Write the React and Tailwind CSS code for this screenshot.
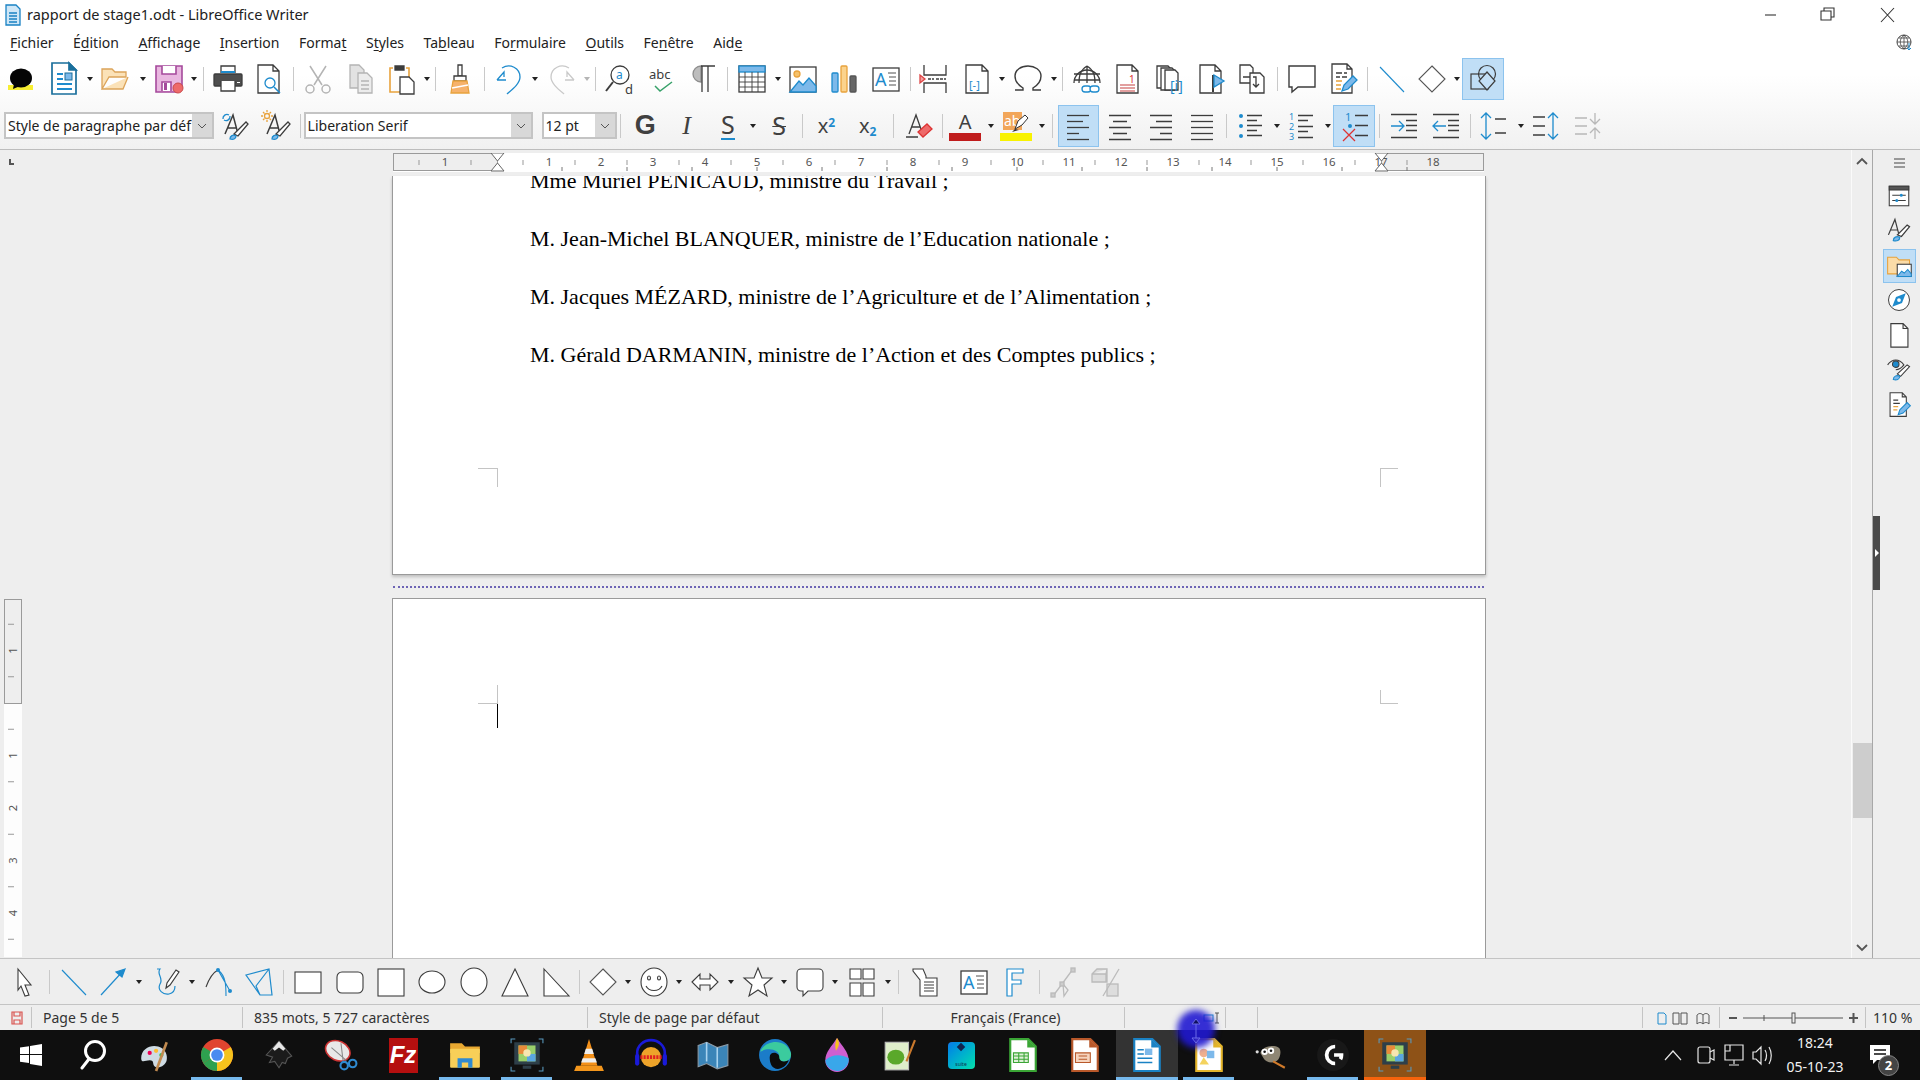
import React from 'react';

const DARK = '#3c3c3c';
const BLUE = '#1e8bcd';
const SKY = '#7db9ea';
const ORANGE = '#e8a23c';

// base frame for a 32px toolbar icon
const Ic = ({ children, size = 32, sw = 1.3, stroke = DARK }) => (
  <svg width={size} height={size} viewBox="0 0 32 32" fill="none" stroke={stroke} strokeWidth={sw} overflow="visible">
    {children}
  </svg>
);

const Page = ({ x = 6, y = 2, w = 20, h = 28, c = 5, stroke = DARK, fill = '#fff' }) => (
  <path d={`M${x} ${y}h${w - c}l${c} ${c}v${h - c}h-${w}z M${x + w - c} ${y}v${c}h${c}`} stroke={stroke} fill={fill} />
);

const Lines = ({ x, y, w, gap = 5, n = 4, stroke = DARK, widths }) => (
  <g stroke={stroke}>
    {Array.from({ length: n }).map((_, i) => {
      const ww = widths ? widths[i] : w;
      return <path key={i} d={`M${x} ${y + i * gap + 0.5}h${ww}`} />;
    })}
  </g>
);

const icons = {
  speech: (
    <Ic stroke="none">
      <rect x="3" y="22" width="25" height="5" fill="#f7ee32" />
      <ellipse cx="16" cy="15" rx="11" ry="9.5" fill="#050505" />
      <path d="M9 21l-1 5 7-3z" fill="#050505" />
    </Ic>
  ),
  newDoc: (
    <Ic stroke="#1a6f9c" sw="1.7">
      <path d="M4 0h17l7 7v24H4z" fill="#fff" />
      <path d="M21 0l7 7h-7z" fill="#1a6f9c" />
      <path d="M9 11h6M9 16h6M9 21h15M9 26h15" stroke={BLUE} strokeWidth="2" />
      <rect x="17" y="10" width="7" height="7" fill={SKY} strokeWidth="1" />
    </Ic>
  ),
  open: (
    <Ic stroke="#dca45a" sw="1.3">
      <path d="M3 26V6h10l3 3h11v5H10L3 26h21l5-12" fill="#fbe2b8" />
    </Ic>
  ),
  save: (
    <Ic stroke="#a54a9c" sw="1.6">
      <path d="M3 3h26v20l-5 6H3z" fill="#e9b7e0" />
      <path d="M9 3v8h14V3" fill="#fff" />
      <path d="M9 28V19h9v9" fill="#fff" />
      <rect x="11" y="20" width="3" height="7" fill="#a54a9c" stroke="none" />
      <circle cx="25" cy="25" r="5" fill="#ee6a6a" stroke="#c94a4a" strokeWidth="1" />
    </Ic>
  ),
  print: (
    <Ic>
      <path d="M9 10V3h14v7" fill="#fff" />
      <rect x="9" y="8" width="14" height="2" fill={BLUE} stroke="none" />
      <rect x="2" y="11" width="28" height="12" fill="#4e4e4e" rx="1" />
      <path d="M9 18v10h14V18" fill="#fff" />
      <rect x="25" y="19" width="3" height="1" fill="#fff" stroke="none" />
    </Ic>
  ),
  preview: (
    <Ic>
      <Page x={5} y={2} w={21} h={28} c={6} />
      <circle cx="17" cy="20" r="5" stroke={BLUE} fill="#fff" />
      <path d="M21 24l6 6" stroke={BLUE} strokeWidth="1.5" />
    </Ic>
  ),
  cut: (
    <Ic stroke="#b4b4b4" sw="1.5">
      <path d="M8 3l12 19M24 3L12 22" />
      <circle cx="8" cy="26" r="4" />
      <circle cx="24" cy="26" r="4" />
    </Ic>
  ),
  copy: (
    <Ic stroke="#b4b4b4">
      <path d="M6 2h9l5 5v18H6z" fill="#e2e2e2" />
      <path d="M14 10h9l5 5v15H14z" fill="#ececec" />
      <path d="M17 18h8M17 22h8M17 26h8" />
    </Ic>
  ),
  paste: (
    <Ic>
      <path d="M21 5h3v24H5V5h3" stroke={ORANGE} strokeWidth="1.6" />
      <path d="M10 3h9v4h-9z" fill={DARK} />
      <path d="M15 14h9l5 5v12H15z" fill="#fff" />
    </Ic>
  ),
  brush: (
    <Ic>
      <path d="M14 2h4v11h-4z" fill="#fff" />
      <path d="M10 13h12v5H10z" fill="#fff" />
      <path d="M9 18h14l2 12H7z" fill="#f6b26b" stroke={ORANGE} />
      <path d="M8 25l16-3" stroke="#fff" />
    </Ic>
  ),
  undo: (
    <Ic stroke={BLUE} sw="1.3">
      <path d="M3 17l7-8 0 5M3 17h9" />
      <path d="M8 5c8-5 18 0 18 9 0 6-6 11-13 17" />
    </Ic>
  ),
  redo: (
    <Ic stroke="#c9c9c9" sw="1.3">
      <path d="M29 17l-7-8 0 5M29 17h-9" />
      <path d="M24 5C16 0 6 5 6 14c0 6 6 11 13 17" />
    </Ic>
  ),
  find: (
    <Ic>
      <circle cx="16" cy="12" r="9" />
      <path d="M9 19L2 28" strokeWidth="2" />
      <text x="12" y="16" fontSize="12" fill={BLUE} stroke="none" fontFamily="Noto Sans">a</text>
      <text x="21" y="31" fontSize="13" fill={DARK} stroke="none" fontFamily="Noto Sans">d</text>
    </Ic>
  ),
  spell: (
    <Ic>
      <text x="3" y="16" fontSize="13" fill={DARK} stroke="none" fontFamily="Noto Sans">abc</text>
      <path d="M9 23l5 5 12-9" stroke="#37a169" strokeWidth="1.5" />
    </Ic>
  ),
  pilcrow: (
    <Ic>
      <path d="M14 3a8 8 0 000 16z" fill="#bdbdbd" stroke="#8e8e8e" />
      <path d="M14 3h14M15 3v26M21 3v26" />
    </Ic>
  ),
  table: (
    <Ic>
      <rect x="3" y="3" width="26" height="26" fill="#fff" />
      <rect x="3" y="3" width="26" height="6" fill={SKY} stroke={BLUE} />
      <path d="M3 14h26M3 19h26M3 24h26M9 9v20M16 9v20M22 9v20" strokeWidth="0.9" />
    </Ic>
  ),
  image: (
    <Ic>
      <rect x="3" y="4" width="26" height="25" fill="#fff" />
      <circle cx="10" cy="11" r="3" fill="#f6c26b" stroke={ORANGE} />
      <path d="M3 29l9-11 4 4 6-7 7 8v6z" fill={SKY} stroke={BLUE} />
    </Ic>
  ),
  chart: (
    <Ic stroke="none">
      <rect x="3" y="10" width="6" height="19" rx="1" fill={SKY} stroke={BLUE} />
      <rect x="12" y="3" width="6" height="26" rx="1" fill="#fbd38d" stroke={ORANGE} />
      <rect x="21" y="13" width="6" height="16" rx="1" fill="#666" stroke="#555" />
    </Ic>
  ),
  textbox: (
    <Ic>
      <rect x="3" y="5" width="26" height="23" fill="#fff" />
      <text x="5" y="23" fontSize="18" fill={BLUE} stroke="none" fontFamily="Noto Sans">A</text>
      <path d="M18 10h8M19 14h7M19 18h7M19 22h7" strokeWidth="0.9" />
    </Ic>
  ),
  pageBreak: (
    <Ic>
      <path d="M5 2v10h22V2M5 30V20h22v10" />
      <path d="M9 16h6M17 16h10" strokeDasharray="3 1" />
      <path d="M1 12l5 4-5 4z" fill="#f2a0a0" stroke="#d44" />
    </Ic>
  ),
  field: (
    <Ic>
      <Page x={5} y={2} w={22} h={28} c={6} />
      <text x="8" y="26" fontSize="11" fill={BLUE} stroke="none" fontFamily="Noto Sans">[-]</text>
    </Ic>
  ),
  omega: (
    <Ic sw="1.4">
      <path d="M3 27h8v-2C6 22 3 18 3 13 3 7 9 3 16 3s13 4 13 10c0 5-3 9-8 12v2h8" />
    </Ic>
  ),
  link: (
    <Ic>
      <path d="M3 20a13 13 0 1126 0" />
      <path d="M16 3c-8 5-8 12-8 17M16 3c8 5 8 12 8 17M16 3v17M3 11h26M3 17h26" />
      <rect x="11" y="23" width="9" height="6" rx="3" stroke={BLUE} fill="#fff" />
      <rect x="19" y="23" width="9" height="6" rx="3" stroke={BLUE} fill="#fff" />
    </Ic>
  ),
  footnote: (
    <Ic>
      <Page x={5} y={2} w={21} h={28} c={6} />
      <text x="17" y="20" fontSize="10" fill="#d33" stroke="none" fontFamily="Noto Sans">1</text>
      <path d="M8 22h15M8 25h15M8 28h15" stroke="#d98080" />
    </Ic>
  ),
  pages: (
    <Ic>
      <path d="M3 3h11l3 3v19H3z" fill="#fff" />
      <path d="M7 5h11l3 3v19H7z" fill="#fff" />
      <path d="M11 7h10l3 3v17H11z" fill="#fff" />
      <text x="16" y="28" fontSize="14" fill={BLUE} stroke="none" fontFamily="Noto Sans">[i]</text>
    </Ic>
  ),
  bookmark: (
    <Ic>
      <Page x={5} y={2} w={21} h={28} c={6} />
      <path d="M18 12v17" stroke={DARK} strokeWidth="2" />
      <path d="M19 12l10 6-10 6z" fill={SKY} stroke={BLUE} />
    </Ic>
  ),
  xref: (
    <Ic>
      <path d="M4 2h10l3 3v15H4z" fill="#fff" />
      <path d="M14 10h10l4 4v16H14z" fill="#fff" />
      <path d="M7 14h7M17 14h3v10M17 21l3 3 3-3" />
    </Ic>
  ),
  comment: (
    <Ic sw="1.4">
      <path d="M3 3h26v21H12l-6 5v-5H3z" fill="#fff" />
    </Ic>
  ),
  track: (
    <Ic>
      <Page x={5} y={1} w={20} h={29} c={5} />
      <path d="M9 10h6M17 10h3M9 14h4M15 14h5" />
      <path d="M9 18h6M9 22h5M9 26h5" stroke={ORANGE} />
      <path d="M15 28l2-6 9-9 4 4-9 9z" fill={SKY} stroke={BLUE} />
    </Ic>
  ),
  line: (
    <Ic stroke={BLUE} sw="1.1">
      <path d="M4 4l24 25" />
    </Ic>
  ),
  diamond: (
    <Ic sw="1.1" stroke="#555">
      <path d="M16 3l13 13-13 13L3 16z" fill="#fff" />
    </Ic>
  ),
  shapes: (
    <Ic sw="1.2">
      <circle cx="20" cy="11" r="8.5" />
      <rect x="4" y="11" width="17" height="15" />
      <path d="M20 9l8 9-8 9-8-9z" fill="#c3dff6" />
    </Ic>
  ),
  styleUpdate: (
    <Ic>
      <path d="M5 24L13 5l5 19M8 18h9" strokeWidth="1.5" />
      <path d="M14 24l12-12 2 2-10 12z" fill="#fff" />
      <path d="M10 29c0-3 3-5 6-3 0 3-3 4-6 3z" fill={SKY} stroke={BLUE} />
      <path d="M3 9a4 4 0 016-4M10 6a4 4 0 01-6 4" stroke={BLUE} />
    </Ic>
  ),
  styleNew: (
    <Ic>
      <path d="M6 24l8-19 5 19M9 18h9" strokeWidth="1.5" />
      <path d="M15 24l12-12 2 2-10 12z" fill="#fff" />
      <path d="M11 29c0-3 3-5 6-3 0 3-3 4-6 3z" fill={SKY} stroke={BLUE} />
      <circle cx="6" cy="6" r="2.5" stroke={ORANGE} />
      <path d="M6 0v2M6 10v2M0 6h2M10 6h2M2 2l1.5 1.5M8.5 8.5L10 10M10 2L8.5 3.5M2 10l1.500-1.500" stroke={ORANGE} />
    </Ic>
  ),
  clearFmt: (
    <Ic>
      <path d="M6 24l7-19 6 17M9 17h8M3 27h12" />
      <path d="M15 22l9-8 5 5-9 8z" fill="#ee6a6a" stroke="#d33" />
    </Ic>
  ),
  alignL: <Ic><Lines x={5} y={5} widths={[22, 16, 22, 12, 22]} n={5} gap={6} /></Ic>,
  alignC: <Ic><path d="M5 5.500h22M9 11.500h14M5 17.500h22M9 23.500h14M5 29.500h22" /></Ic>,
  alignR: <Ic><path d="M5 5.500h22M11 11.500h16M5 17.500h22M15 23.500h12M5 29.500h22" /></Ic>,
  justify: <Ic><Lines x={5} y={5} w={22} n={5} gap={6} /></Ic>,
  bullets: (
    <Ic>
      <g fill={BLUE} stroke="none">
        <circle cx="5" cy="6" r="2" /><circle cx="5" cy="16" r="2" /><circle cx="5" cy="26" r="2" />
      </g>
      <path d="M11 5.500h15M11 10.500h10M11 15.500h15M11 20.500h10M11 25.500h15" />
    </Ic>
  ),
  numbers: (
    <Ic>
      <g fill={BLUE} stroke="none" fontSize="9" fontFamily="Noto Sans">
        <text x="2" y="10">1</text><text x="2" y="20">2</text><text x="2" y="30">3</text>
      </g>
      <path d="M11 5.500h15M11 10.500h10M11 16.500h15M11 21.500h10M11 27.500h15" />
    </Ic>
  ),
  outline: (
    <Ic>
      <text x="7" y="11" fontSize="11" fill={BLUE} stroke="none" fontFamily="Noto Sans">1</text>
      <circle cx="12" cy="16" r="2" fill={BLUE} stroke="none" />
      <path d="M5 19l12 12M17 19L5 31" stroke="#d33" />
      <path d="M17 5.500h13M17 15.500h13M17 25.500h13" />
    </Ic>
  ),
  indent: (
    <Ic>
      <path d="M3 4.500h26M3 27.500h26M18 10.500h11M18 15.500h11M18 20.500h11" />
      <path d="M3 16h12M11 11l5 5-5 5" stroke={BLUE} />
    </Ic>
  ),
  outdent: (
    <Ic>
      <path d="M3 4.500h26M3 27.500h26M18 10.500h11M18 15.500h11M18 20.500h11" />
      <path d="M16 16H4M8 11l-5 5 5 5" stroke={BLUE} />
    </Ic>
  ),
  spacing: (
    <Ic>
      <path d="M7 3v26M2 8l5-5 5 5M2 24l5 5 5-5" stroke={BLUE} />
      <path d="M16 9h11M16 23h11" />
    </Ic>
  ),
  paraUp: (
    <Ic>
      <path d="M3 7h12M3 16h12M3 25h12" />
      <path d="M23 3v26M18 8l5-5 5 5M18 24l5 5 5-5" stroke={BLUE} />
    </Ic>
  ),
  paraDown: (
    <Ic stroke="#b8b8b8">
      <path d="M3 8h12M3 16h12M3 24h12" />
      <path d="M23 3v11M18 9l5 5 5-5M23 29V18M18 23l5-5 5 5" />
    </Ic>
  ),
  select: (
    <Ic sw="1.1">
      <path d="M9 3l13 16h-6l4 10-4 1-4-10-3 4z" fill="#fff" />
    </Ic>
  ),
  arrow: (
    <Ic stroke={BLUE} sw="1.2">
      <path d="M4 29L26 5" />
      <path d="M28 3l-9 3 6 5z" fill={BLUE} />
    </Ic>
  ),
  freeform: (
    <Ic stroke={BLUE} sw="1.2">
      <path d="M6 3h3c-4 5 4 9 0 15-3 6 3 11 9 10 5-1 6-5 6-8" />
      <path d="M15 22l1-5 9-13 3 2-9 13z" fill="#fff" stroke={DARK} />
    </Ic>
  ),
  curve: (
    <Ic stroke={DARK} sw="1.1">
      <path d="M4 21C8 10 12 6 16 4" />
      <path d="M16 4c8 6 8 16 8 26M16 4l12 21" stroke={BLUE} />
      <circle cx="16" cy="4" r="2" fill={BLUE} stroke="none" />
      <circle cx="28" cy="25" r="2" fill={BLUE} stroke="none" />
    </Ic>
  ),
  polygon: (
    <Ic stroke={BLUE} sw="1.2">
      <path d="M3 9L26 3l3 26-12 0zM26 3L13 20l4 9" />
    </Ic>
  ),
  rect: <Ic sw="1.1"><rect x="3" y="6" width="26" height="21" fill="#fff" /></Ic>,
  rrect: <Ic sw="1.1"><rect x="3" y="6" width="26" height="21" rx="5" fill="#fff" /></Ic>,
  square: <Ic sw="1.1"><rect x="3" y="3" width="26" height="27" fill="#fff" /></Ic>,
  ellipse: <Ic sw="1.1"><ellipse cx="16" cy="16" rx="13" ry="11" fill="#fff" /></Ic>,
  circle: <Ic sw="1.1"><ellipse cx="16" cy="16" rx="13" ry="14" fill="#fff" /></Ic>,
  triangle: <Ic sw="1.1"><path d="M16 3l13 27H3z" fill="#fff" /></Ic>,
  rtriangle: <Ic sw="1.1"><path d="M4 3l25 27H4z" fill="#fff" /></Ic>,
  smiley: (
    <Ic sw="1.1">
      <ellipse cx="16" cy="16" rx="13" ry="14" fill="#fff" />
      <ellipse cx="11" cy="12" rx="1.500" ry="2" />
      <ellipse cx="21" cy="12" rx="1.500" ry="2" />
      <path d="M8 20c3 6 13 6 16 0" />
    </Ic>
  ),
  dblArrow: (
    <Ic sw="1.1">
      <path d="M3 16l8-8v5h10V8l8 8-8 8v-5H11v5z" fill="#fff" />
    </Ic>
  ),
  star: (
    <Ic sw="1.1">
      <path d="M16 2l4 10h10l-8 7 3 11-9-6-9 6 3-11-8-7h10z" fill="#fff" />
    </Ic>
  ),
  callout: (
    <Ic sw="1.1">
      <path d="M7 3h18a4 4 0 014 4v14a4 4 0 01-4 4H14l-5 5v-5H7a4 4 0 01-4-4V7a4 4 0 014-4z" fill="#fff" />
    </Ic>
  ),
  flow: (
    <Ic sw="1.1">
      <path d="M4 3h11v10H4zM17 3h11v10H17zM4 17h11v13H4zM17 17h11v13H17z" fill="#fff" />
    </Ic>
  ),
  gallery: (
    <Ic sw="1.1">
      <path d="M4 3h10l3 7v2h11v18H11V14L4 5z" fill="#fff" />
      <path d="M15 16h10M15 19h10M15 22h10M15 25h10" />
    </Ic>
  ),
  fontwork: (
    <Ic stroke={BLUE} sw="1.2">
      <path d="M8 3h16v4H13v7h9v4h-9v12H8z" fill="#fff" />
    </Ic>
  ),
  points: (
    <Ic stroke="#bbb">
      <path d="M26 3L15 18l-9 12M16 18l5 6-4 6z" />
      <rect x="24" y="2" width="4" height="4" fill="#ccc" />
      <rect x="13" y="16" width="4" height="4" fill="#ccc" />
      <rect x="4" y="27" width="4" height="4" fill="#ccc" />
    </Ic>
  ),
  extrusion: (
    <Ic stroke="#bbb">
      <path d="M4 8l5-5h10v13H4z M4 8h14l1-5M18 8v8" fill="#ddd" />
      <rect x="19" y="18" width="11" height="12" fill="#ddd" />
      <path d="M31 3L15 30" />
    </Ic>
  ),
  sbProps: (
    <Ic size={24} sw="1.4">
      <rect x="3" y="3" width="26" height="26" fill="#fff" />
      <rect x="3" y="3" width="26" height="5" fill="#555" />
      <path d="M7 15h18M7 22h18" />
      <circle cx="19" cy="15" r="2" fill={BLUE} stroke="none" />
      <circle cx="13" cy="22" r="2" fill={BLUE} stroke="none" />
    </Ic>
  ),
  sbStyles: (
    <Ic size={26} sw="1.5">
      <path d="M3 22L11 3l5 19M6 16h9" />
      <path d="M14 22l12-12 3 2-10 12z" fill="#fff" />
      <path d="M9 29c0-4 4-6 8-4 0 4-4 5-8 4z" fill={SKY} stroke={BLUE} />
    </Ic>
  ),
  sbGallery: (
    <Ic size={28} sw="1.2">
      <path d="M3 25V6h10l3 3h12v16z" fill="#fbdca8" stroke={ORANGE} />
      <rect x="14" y="14" width="16" height="14" fill="#fff" />
      <path d="M14 28l5-6 3 2 4-4 4 5v3z" fill={SKY} stroke={BLUE} />
    </Ic>
  ),
  sbNav: (
    <Ic size={24} sw="1.3">
      <circle cx="16" cy="16" r="14" fill="#fff" />
      <path d="M25 7l-5 13-13 5 5-13z" fill={BLUE} stroke="none" />
      <circle cx="16" cy="16" r="2.500" fill="#fff" stroke="none" />
    </Ic>
  ),
  sbPage: (
    <Ic size={26} sw="1.4">
      <path d="M6 2h15l6 6v23H6zM21 2v6h6" fill="#fff" />
    </Ic>
  ),
  sbInspect: (
    <Ic size={26} sw="1.3">
      <path d="M2 11c6-8 14-8 20 0-3 4-6 6-10 6" />
      <circle cx="12" cy="10" r="4" fill={BLUE} stroke={DARK} />
      <path d="M14 22l12-11 3 2-11 12z" fill="#fff" />
      <path d="M9 29c0-4 4-6 8-4 0 4-4 5-8 4z" fill={SKY} stroke={BLUE} />
    </Ic>
  ),
  sbManage: (
    <Ic size={26} sw="1.3">
      <Page x={5} y={1} w={20} h={29} c={5} />
      <path d="M9 10h6M9 14h8" />
      <path d="M9 18h6M9 22h5" stroke={ORANGE} />
      <path d="M15 28l2-6 9-9 4 4-9 9z" fill={SKY} stroke={BLUE} />
    </Ic>
  ),
};

const Underlined = ({ text, at }) => (
  <span>
    {text.slice(0, at)}
    <span className="underline underline-offset-2">{text[at]}</span>
    {text.slice(at + 1)}
  </span>
);

const Btn = ({ name, active, className = '' }) => (
  <div
    className={`w-[41.3px] h-[42px] shrink-0 flex items-center justify-center ${
      active ? 'bg-[#c0def6] border border-[#8cc3ee]' : ''
    } ${className}`}
  >
    {icons[name]}
  </div>
);

const Dd = ({ muted }) => (
  <div className="w-[10px] shrink-0 flex items-center justify-center">
    <div
      className={`w-0 h-0 border-l-[3px] border-r-[3px] border-t-[4px] border-l-transparent border-r-transparent ${
        muted ? 'border-t-[#b5b5b5]' : 'border-t-[#222222]'
      }`}
    />
  </div>
);

const Sep = ({ w = 8 }) => (
  <div className="shrink-0 flex justify-center" style={{ width: w }}>
    <div className="w-px h-[24px] bg-[#c9c9c9]" />
  </div>
);

const Glyph = ({ children, className = '' }) => (
  <div className={`w-[41.3px] h-[42px] shrink-0 flex items-center justify-center text-[#404040] ${className}`}>
    {children}
  </div>
);

const Combo = ({ label, w, font = '' }) => (
  <div className={`h-[27px] shrink-0 flex border-2 border-[#c4c4c4] bg-white ${w}`}>
    <div className={`flex-1 min-w-0 overflow-hidden whitespace-nowrap pl-[2px] text-[14px] leading-[23px] text-[#222222] ${font}`}>
      {label}
    </div>
    <div className="w-[20px] shrink-0 bg-[#d8d8d8] flex items-center justify-center">
      <svg width="10" height="6" viewBox="0 0 10 6" fill="none" stroke="#555555">
        <path d="M1 1l4 4 4-4" />
      </svg>
    </div>
  </div>
);

const MENU = [
  ['Fichier', 0], ['Édition', 1], ['Affichage', 0], ['Insertion', 0], ['Format', 5], ['Styles', 1],
  ['Tableau', 2], ['Formulaire', 2], ['Outils', 0], ['Fenêtre', 2], ['Aide', 3],
];

const MINISTERS = [
  'Mme Muriel PÉNICAUD, ministre du Travail ;',
  'M. Jean-Michel BLANQUER, ministre de l’Education nationale ;',
  'M. Jacques MÉZARD, ministre de l’Agriculture et de l’Alimentation ;',
  'M. Gérald DARMANIN, ministre de l’Action et des Comptes publics ;',
];

const HRuler = () => {
  const x0 = 104;
  const cm = 52;
  const nums = Array.from({ length: 18 }, (_, i) => i + 1);
  return (
    <svg width="1091" height="19" viewBox="0 0 1091 19" className="block">
      <rect x="0" y="0" width="1091" height="19" fill="#fff" />
      <rect x="0.5" y="0.500" width={x0} height="17" fill="#eeeeee" stroke="#9a9a9a" />
      <rect x="988.5" y="0.500" width="102" height="17" fill="#eeeeee" stroke="#9a9a9a" />
      {nums.map((n) => (
        <g key={n}>
          <text x={x0 + cm * n} y="13" fontSize="11.5" textAnchor="middle" fill="#555555" fontFamily="Noto Sans">{n}</text>
          <path d={`M${x0 + cm * (n - 0.5)} 7v5`} stroke="#999999" />
        </g>
      ))}
      <text x={x0 - cm} y="13" fontSize="11.5" textAnchor="middle" fill="#555555" fontFamily="Noto Sans">1</text>
      <path d={`M${x0 - cm / 2} 7v5M${x0 - cm * 1.5} 7v5`} stroke="#999999" />
      {Array.from({ length: 14 }, (_, i) => (
        <path key={i} d={`M${x0 + 65 * (i + 1)} 14v4`} stroke="#777777" />
      ))}
      <path d="M98 0h13l-6.500 8zM98 18h13l-6.500-8z" fill="#fff" stroke="#666666" />
      <path d="M982 0h13l-6.500 8zM982 18h13l-6.500-8z" fill="#fff" stroke="#666666" />
    </svg>
  );
};

const VRuler = () => {
  const y0 = 104;
  const cm = 52.5;
  return (
    <svg width="18" height="358" viewBox="0 0 18 358" className="block">
      <rect x="0" y="0" width="18" height="358" fill="#fdfdfd" />
      <rect x="0.5" y="0.500" width="17" height={y0} fill="#eeeeee" stroke="#9a9a9a" />
      {[-1, 1, 2, 3, 4].map((n) => (
        <text
          key={n}
          x="9"
          y={y0 + cm * n}
          fontSize="11"
          textAnchor="middle"
          fill="#555555"
          fontFamily="Noto Sans"
          transform={`rotate(-90 9 ${y0 + cm * n})`}
          dy="4"
        >
          {Math.abs(n)}
        </text>
      ))}
      {[-1.5, -0.5, 0.5, 1.5, 2.5, 3.5, 4.5, 5.5].map((n) => (
        <path key={n} d={`M4 ${y0 + cm * n}h6`} stroke="#999999" />
      ))}
    </svg>
  );
};

const DrawingBar = () => (
  <div className="h-[47px] shrink-0 flex items-center pl-[4px] bg-[#eeeeee] border-y border-[#c4c4c4]">
    <Btn name="select" />
    <Sep w={8} />
    <Btn name="line" />
    <Btn name="arrow" className="-ml-[2px]" />
    <Dd />
    <Btn name="freeform" className="ml-[2px]" />
    <Dd />
    <Btn name="curve" />
    <Btn name="polygon" />
    <Sep w={8} />
    <Btn name="rect" />
    <Btn name="rrect" />
    <Btn name="square" />
    <Btn name="ellipse" />
    <Btn name="circle" />
    <Btn name="triangle" />
    <Btn name="rtriangle" />
    <Sep w={5} />
    <Btn name="diamond" />
    <Dd />
    <Btn name="smiley" />
    <Dd />
    <Btn name="dblArrow" />
    <Dd />
    <Btn name="star" className="ml-[2px]" />
    <Dd />
    <Btn name="callout" />
    <Dd />
    <Btn name="flow" className="ml-[1px]" />
    <Dd />
    <Sep w={12} />
    <Btn name="gallery" />
    <div className="w-[7px] shrink-0" />
    <Btn name="textbox" />
    <Btn name="fontwork" />
    <Sep w={7} />
    <Btn name="points" />
    <Btn name="extrusion" />
  </div>
);

const Cell = ({ w, children, className = '' }) => (
  <div className={`h-[21px] shrink-0 border-r border-[#c4c4c4] flex items-center ${w} ${className}`}>{children}</div>
);

const StatusBar = () => (
  <div className="h-[25px] shrink-0 flex items-center bg-[#eeeeee] text-[14px] text-[#333333] pl-[10px]">
    <Cell w="w-[22px]">
      <svg width="14" height="14" viewBox="0 0 14 14" fill="none" stroke="#d9534f" strokeWidth="1.2">
        <path d="M2 1h10v12H2zM4 1v4h6V1M4 13V9h6v4" />
      </svg>
    </Cell>
    <Cell w="w-[211px]" className="pl-[11px]">Page 5 de 5</Cell>
    <Cell w="w-[345px]" className="pl-[11px]">835 mots, 5 727 caractères</Cell>
    <Cell w="w-[295px]" className="pl-[11px]">Style de page par défaut</Cell>
    <Cell w="w-[242px]" className="justify-center pl-[4px]">Français (France)</Cell>
    <Cell w="w-[101px]" className="justify-end pr-[2px]">
      <svg width="20" height="14" viewBox="0 0 20 14" fill="none" stroke="#555555">
        <rect x="1" y="4" width="9" height="6" stroke={BLUE} />
        <path d="M12 2h4M14 2v10M12 12h4" />
      </svg>
    </Cell>
    <Cell w="w-[32px]" />
    <Cell w="w-[385px]" />
    <Cell w="w-[77px]" className="justify-center pl-[10px]">
      <svg width="58" height="16" viewBox="0 0 58 16" fill="none" stroke="#555555">
        <path d="M1 3h6l2 2v9H1z" stroke={BLUE} />
        <path d="M23 3h6v11h-6zM31 3h6v11h-6z" transform="translate(-7 0)" />
        <path d="M40 5c2-2 4-2 6 0 2-2 4-2 6 0v9c-2-2-4-2-6 0-2-2-4-2-6 0zM46 5v9" />
      </svg>
    </Cell>
    <Cell w="w-[146px]" className="pl-[8px]">
      <svg width="132" height="16" viewBox="0 0 132 16" fill="none" stroke="#555555">
        <path d="M1 8h8" strokeWidth="2" />
        <path d="M15 8h100" />
        <path d="M36 5v6" />
        <rect x="64" y="3" width="3" height="10" fill="#eeeeee" />
        <path d="M121 8h9M125.500 3v10" strokeWidth="2" />
      </svg>
    </Cell>
    <div className="pl-[7px] whitespace-nowrap">110 %</div>
  </div>
);

const TB_ICON = 34;

function Movavi() {
  return (
    <svg width={TB_ICON} height={TB_ICON} viewBox="0 0 32 32" fill="none">
      <path d="M1 5V1h4M27 1h4v4M1 27v4h4M31 27v4h-4" stroke="#5a9ac0" />
      <rect x="4" y="4" width="24" height="21" fill="#2e3f49" />
      <rect x="8" y="7" width="16" height="15" fill="#9ad06b" />
      <path d="M8 7h8v8H8z" fill="#e88a3a" />
      <path d="M16 15h8v7h-8z" fill="#5aa6e0" />
      <circle cx="16" cy="14" r="3.500" fill="#f6e6b0" />
      <rect x="12" y="26" width="8" height="3" fill="#2e3f49" />
    </svg>
  );
}

function LoIcon({ border, corner, children }) {
  return (
    <svg width={TB_ICON} height={TB_ICON} viewBox="0 0 32 32" fill="none">
      <path d="M4 1h17l7 7v23H4z" fill="#fff" stroke={border} strokeWidth="2" />
      <path d="M20 1l8 8h-8z" fill={corner} />
      {children}
    </svg>
  );
}

const Chrome = () => (
  <svg width={TB_ICON} height={TB_ICON} viewBox="0 0 32 32">
    <circle cx="16" cy="16" r="15" fill="#e0442f" />
    <path d="M16 16L3 23.500A15 15 0 0016 31z" fill="#2ea14f" />
    <path d="M16 16L3 8.500A15 15 0 003 23.500z" fill="#2ea14f" />
    <path d="M16 16l13-7.500A15 15 0 0116 31z" fill="#f6c21c" />
    <circle cx="16" cy="16" r="7" fill="#fff" />
    <circle cx="16" cy="16" r="5.500" fill="#4a8bf0" />
  </svg>
);

const TASK_ICONS = [
  <svg key="w" width="22" height="22" viewBox="0 0 22 22" fill="#fff"><path d="M0 3.500l9-1.300V10H0zM10 2l12-2v10H10zM0 11h9v8l-9-1.300zM10 11h12v11l-12-2z" /></svg>,
  <svg key="s" width="26" height="30" viewBox="0 0 26 30" fill="none" stroke="#fff" strokeWidth="3"><circle cx="15" cy="11" r="9.500" /><path d="M9 19l-7 9" strokeLinecap="round" /></svg>,
  <svg key="p" width={TB_ICON} height={TB_ICON} viewBox="0 0 32 32"><path d="M3 19c0-9 9-13 16-11 7 2 9 8 8 13-1 5-7 8-11 6-3-2 0-6-5-6-4 0-8 3-8-2z" fill="#cfdbe3" /><circle cx="11" cy="14" r="2" fill="#e05" /><circle cx="17" cy="12" r="2" fill="#fb3" /><circle cx="22" cy="16" r="2" fill="#3b5" /><path d="M17 31L27 4" stroke="#c08a50" strokeWidth="2.500" /></svg>,
  <Chrome key="c" />,
  <svg key="i" width={TB_ICON} height={TB_ICON} viewBox="0 0 32 32"><path d="M16 3l12 14-4 2-2 5-3-1-3 5-4-6-5 1 3-5-6-2z" fill="#1b1b1b" stroke="#555" /><path d="M16 3l6 7-2 2-4-3-4 3-2-2z" fill="#e6e6e6" /></svg>,
  <svg key="sn" width={TB_ICON} height={TB_ICON} viewBox="0 0 32 32" fill="none"><ellipse cx="13" cy="12" rx="12" ry="9" fill="#e8e8e8" stroke="#c33" strokeWidth="1.500" transform="rotate(25 13 12)" /><path d="M7 9l14 12M16 5l2 17" stroke="#888" /><circle cx="19" cy="26" r="3.500" stroke="#2f8ad0" strokeWidth="2" /><circle cx="27" cy="24" r="3.500" stroke="#2f8ad0" strokeWidth="2" /></svg>,
  <div key="f" className="w-[29px] h-[35px] bg-[#b50f0f] flex items-center justify-center text-white font-bold italic text-[24px] leading-none font-['Liberation_Sans',sans-serif]">Fz</div>,
  <svg key="e" width={TB_ICON} height={TB_ICON} viewBox="0 0 32 32"><path d="M2 5h11l3 3h14v6H2z" fill="#e8a831" /><rect x="2" y="10" width="28" height="18" rx="1" fill="#f8cf58" /><path d="M9 28v-9h14v9h-4v-5h-6v5z" fill="#2f8ad0" /></svg>,
  <Movavi key="m" />,
  <svg key="v" width={TB_ICON} height={TB_ICON} viewBox="0 0 32 32"><path d="M16 1l4 13 4 12H8l4-12z" fill="#f39019" /><path d="M13 10h6l1.500 5h-9z" fill="#eee" /><path d="M10 19h12l1.500 4H8.500z" fill="#eee" /><path d="M4 26h24l2 5H2z" fill="#f3961c" /></svg>,
  <svg key="a" width={TB_ICON} height={TB_ICON} viewBox="0 0 32 32" fill="none"><path d="M3 20V14a13 12 0 0126 0v6" stroke="#1a1ad8" strokeWidth="2.500" /><rect x="1" y="15" width="4" height="11" rx="2" fill="#1a1ad8" /><rect x="27" y="15" width="4" height="11" rx="2" fill="#1a1ad8" /><circle cx="16" cy="18" r="9.500" fill="#eda32a" /><path d="M6 18h20" stroke="#e02020" strokeWidth="3.500" strokeDasharray="2 1" /></svg>,
  <svg key="ma" width={TB_ICON} height={TB_ICON} viewBox="0 0 32 32"><path d="M2 7l8-3 10 5 10-3v20l-10 3-10-5-8 3z" fill="#3b85b8" stroke="#8b9aa6" /><path d="M10 4v18M20 9v19" stroke="#a9d3ef" strokeWidth="1.500" /></svg>,
  <svg key="ed" width={TB_ICON} height={TB_ICON} viewBox="0 0 32 32"><circle cx="16" cy="16" r="15" fill="#1b7cc9" /><path d="M2 13C6 2 26-1 31 14c1 6-4 9-9 8-4-1-2-3-2-5 0-5-9-9-18-4z" fill="#3bcb9e" /><path d="M11 18c0-6 9-5 9 0 0 4 5 5 9 3-3 7-10 10-14 7-3-2-4-6-4-10z" fill="#0c0c0c" /></svg>,
  <svg key="pa" width={TB_ICON} height={TB_ICON} viewBox="0 0 32 32"><path d="M16 0c5 8 11 13 11 21a11 11 0 01-22 0C5 13 11 8 16 0z" fill="#d05fd0" /><path d="M5 21c6-6 15-6 22-2a11 11 0 01-22 2z" fill="#39a7ea" /><path d="M16 0c3 4 2 8-1 12-1-4-1-8 1-12z" fill="#f6c21c" /></svg>,
  <svg key="n" width={TB_ICON} height={TB_ICON} viewBox="0 0 32 32"><rect x="3" y="4" width="22" height="26" fill="#dfeecb" stroke="#bbb" /><ellipse cx="13" cy="18" rx="8" ry="7" fill="#5aa82a" /><path d="M23 22L31 2" stroke="#c9782c" strokeWidth="2" /></svg>,
  <div key="su" className="w-[27px] h-[27px] rounded-[4px] bg-gradient-to-br from-[#1478e8] to-[#14e0a8] flex flex-col items-center justify-between py-[2px] text-[#10304f] text-[5px] leading-none font-['Noto_Sans',sans-serif]"><div className="w-[6px] h-[6px] bg-[#10244f] rotate-45" /><span>suite</span></div>,
  <LoIcon key="ca" border="#3aa535" corner="#3aa535"><path d="M7 14h14v9H7zM7 17h14M7 20h14M12 14v9M17 14v9" stroke="#3aa535" fill="#dff0d8" strokeWidth="1" /></LoIcon>,
  <LoIcon key="im" border="#b8582a" corner="#b8582a"><path d="M7 14h14v9H7z" fill="#f6d5bf" stroke="#b8582a" /><path d="M10 17h8M10 20h8" stroke="#b8582a" /></LoIcon>,
  <LoIcon key="wr" border="#1a82c4" corner="#1a82c4"><path d="M7 11h6M7 15h6M7 19h14M7 23h14" stroke="#1a82c4" strokeWidth="1.500" /><rect x="14" y="10" width="7" height="6" fill={SKY} /></LoIcon>,
  <LoIcon key="dr" border="#e5b52a" corner="#e5b52a"><circle cx="11" cy="14" r="4" fill="#f0b08e" /><path d="M7 25l4-7 5 7z" fill="#f4d35e" /><rect x="14" y="12" width="7" height="7" fill={SKY} /></LoIcon>,
  <svg key="g" width={TB_ICON} height={TB_ICON} viewBox="0 0 32 32"><path d="M6 14c2-6 12-8 17-5 3 2 2 8 0 11-4 5-12 3-14-1z" fill="#8e8674" /><circle cx="10" cy="13" r="3" fill="#fff" /><circle cx="16" cy="12" r="3" fill="#fff" /><circle cx="10" cy="13" r="1.200" fill="#111" /><circle cx="16" cy="12" r="1.200" fill="#111" /><path d="M18 22l11 6" stroke="#d07a2a" strokeWidth="2" /><circle cx="3" cy="13" r="1.500" fill="#ddd" /></svg>,
  <svg key="l" width={TB_ICON} height={TB_ICON} viewBox="0 0 32 32" fill="none"><circle cx="16" cy="16" r="15" fill="#181818" /><path d="M18 8a8 8 0 100 16" stroke="#fff" strokeWidth="3.500" /><path d="M17 16h7a8 8 0 01-1 4" stroke="#fff" strokeWidth="3.500" /></svg>,
  <Movavi key="m2" />,
];

const Taskbar = () => (
  <div className="h-[50px] shrink-0 flex bg-[#0f0f0f]">
    {TASK_ICONS.map((icon, i) => {
      const underline = [3, 7, 8, 19, 21].includes(i);
      const isWriter = i === 18;
      const isLast = i === 22;
      return (
        <div
          key={i}
          className={`relative w-[62px] h-full shrink-0 flex items-center justify-center pt-[3px] border-b-[3px] ${
            isLast
              ? 'bg-[#8e5217] border-[#f7630c]'
              : isWriter
                ? 'bg-[#333333] border-[#76b9ed]'
                : 'border-transparent'
          }`}
        >
          {icon}
          {underline && <div className="absolute -bottom-[3px] left-[5px] w-[51px] h-[3px] bg-[#76b9ed]" />}
        </div>
      );
    })}
    <div className="flex-1 flex items-center justify-end text-white">
      <svg className="-mr-[9px]" width="118" height="30" viewBox="0 0 118 30" fill="none" stroke="#e6e6e6" strokeWidth="1.200">
        <path d="M2 20l8-9 8 9" />
        <rect x="35" y="7" width="12" height="16" rx="2" />
        <path d="M47 12l4-2v10l-4-2" />
        <path d="M62 5h18v15H62zM71 20v4M66 25h10M62 5h5v6h-5" />
        <path d="M90 12h3l5-5v17l-5-5h-3zM102 10c2 3 2 8 0 11M106 7c3 5 3 12 0 17" />
      </svg>
      <div className="w-[86px] flex flex-col items-center text-[14px] leading-[24px] text-[#f2f2f2]">
        <span>18:24</span>
        <span>05-10-23</span>
      </div>
      <div className="w-[62px] pl-[11px]">
        <div className="relative w-[22px] h-[22px]">
          <svg width="22" height="22" viewBox="0 0 22 22" fill="#fff">
            <path d="M1 1h20v15H8l-4 4v-4H1z" />
            <path d="M5 6h12M5 10h12" stroke="#0f0f0f" strokeWidth="1.500" />
          </svg>
          <div className="absolute left-[9px] top-[11px] w-[21px] h-[21px] rounded-full bg-[#444444] border border-[#888888] text-[13px] leading-[19px] text-center font-bold text-white">
            2
          </div>
        </div>
      </div>
    </div>
  </div>
);

const App = () => (
  <div className="w-[1920px] h-[1080px] overflow-hidden flex flex-col relative bg-[#eeeeee] font-['Noto_Sans',sans-serif]">
    {/* title, menu and the two toolbars share one soft gradient */}
    <div className="shrink-0 bg-gradient-to-b from-white via-white to-[#f1f1f1] border-b border-[#bdbdbd] h-[150px]">
      <div className="h-[30px] flex items-center pl-[5px] text-[14.5px] text-[#222222]">
        <svg width="16" height="22" viewBox="0 0 16 22" fill="none" stroke="#1a82c4" strokeWidth="1.300">
          <path d="M1 1h10l4 4v16H1z" fill="#cfe7f7" />
          <path d="M4 9h8M4 12h8M4 15h8M4 18h8" />
        </svg>
        <span className="ml-[6px]">rapport de stage1.odt - LibreOffice Writer</span>
        <div className="ml-auto flex items-center text-[#333333]">
          <svg width="140" height="20" viewBox="0 0 140 20" fill="none" stroke="#333333" strokeWidth="1.100">
            <path d="M2 10h11" />
            <path d="M58 6h10v9H58zM61 6V3h10v9h-3" />
            <path d="M118 3l13 14M131 3l-13 14" />
          </svg>
          <div className="w-[17px]" />
        </div>
      </div>
      <div className="h-[26px] -mt-[1px] flex items-center text-[14px] text-[#222222] pl-[2px] relative">
        {MENU.map(([label, at]) => (
          <div key={label} className="px-[8px] whitespace-nowrap mr-[3.5px]">
            <Underlined text={label} at={at} />
          </div>
        ))}
        <div className="ml-auto pr-[7px]">
          <svg width="17" height="17" viewBox="0 0 17 17" fill="none" stroke="#444444">
            <circle cx="8" cy="8" r="7" />
            <path d="M1 8h14M8 1v14M3 4h10M3 12h10M8 1c-5 4-5 10 0 14M8 1c5 4 5 10 0 14" strokeWidth="0.800" />
            <path d="M13 9v7M11 14l2 2 2-2" stroke={BLUE} />
          </svg>
        </div>
      </div>
      <div className="h-[47px] flex items-center">
        <Btn name="speech" />
        <div className="w-[2px] shrink-0" />
        <Btn name="newDoc" />
        <Dd />
        <Btn name="open" />
        <div className="w-[2px] shrink-0" />
        <Dd />
        <Btn name="save" />
        <Dd />
        <Sep />
        <Btn name="print" />
        <Btn name="preview" />
        <Sep />
        <Btn name="cut" />
        <Btn name="copy" />
        <Btn name="paste" />
        <Dd />
        <Sep />
        <Btn name="brush" />
        <Sep />
        <Btn name="undo" />
        <Dd />
        <Btn name="redo" />
        <Dd muted />
        <Sep />
        <Btn name="find" />
        <Btn name="spell" />
        <Btn name="pilcrow" />
        <Sep />
        <Btn name="table" />
        <Dd />
        <Btn name="image" />
        <Btn name="chart" />
        <Btn name="textbox" />
        <Sep />
        <Btn name="pageBreak" />
        <Btn name="field" />
        <Dd />
        <Btn name="omega" />
        <Dd />
        <Sep />
        <Btn name="link" />
        <Btn name="footnote" />
        <Btn name="pages" />
        <Btn name="bookmark" />
        <Btn name="xref" />
        <Sep />
        <Btn name="comment" />
        <Btn name="track" />
        <Sep />
        <Btn name="line" />
        <Btn name="diamond" className="-ml-[2px]" />
        <Dd />
        <Btn name="shapes" active />
      </div>
      <div className="h-[47px] flex items-center pl-[4px]">
        <Combo label="Style de paragraphe par déf" w="w-[210px]" />
        <div className="w-[1px] shrink-0" />
        <Btn name="styleUpdate" />
        <Btn name="styleNew" />
        <Sep w={6} />
        <Combo label="Liberation Serif" w="w-[229px]" />
        <div className="w-[9px] shrink-0" />
        <Combo label="12 pt" w="w-[75px]" />
        <Sep w={8} />
        <Glyph className="text-[27px] font-bold font-['Liberation_Sans',sans-serif]">G</Glyph>
        <Glyph className="text-[26px] italic font-['Liberation_Serif',serif] font-normal">I</Glyph>
        <Glyph className="text-[25px]">
          <span className="border-b-2 border-[#1e8bcd] leading-[27px]">S</span>
        </Glyph>
        <Dd />
        <Glyph className="text-[25px] line-through decoration-1">S</Glyph>
        <Sep w={6} />
        <Glyph className="text-[20px]">
          <span>x<sup className="text-[12px] text-[#1e8bcd] font-bold">2</sup></span>
        </Glyph>
        <Glyph className="text-[20px]">
          <span>x<sub className="text-[12px] text-[#1e8bcd] font-bold">2</sub></span>
        </Glyph>
        <Sep w={10} />
        <Btn name="clearFmt" />
        <Sep w={5} />
        <div className="w-[41px] h-[42px] shrink-0 flex flex-col items-center justify-center text-[#404040]">
          <span className="text-[20px] leading-[22px]">A</span>
          <div className="w-[32px] h-[8px] bg-[#c01c1c]" />
        </div>
        <Dd />
        <div className="w-[41px] h-[42px] shrink-0 flex flex-col items-center justify-center">
          <svg width="32" height="22" viewBox="0 0 32 22">
            <rect x="3" y="1" width="19" height="18" fill="#f2a65a" />
            <text x="4" y="15" fontSize="14" fill="#fff" fontFamily="Noto Sans">ab</text>
            <path d="M15 18l3-8 7-6 3 3-6 7z" fill="#fff" stroke="#333333" />
            <path d="M12 21l3-3 4 1z" fill="#333333" />
          </svg>
          <div className="w-[32px] h-[8px] bg-[#f8f200]" />
        </div>
        <Dd />
        <Sep w={11} />
        <Btn name="alignL" active />
        <Btn name="alignC" />
        <Btn name="alignR" />
        <Btn name="justify" />
        <Sep />
        <Btn name="bullets" />
        <Dd />
        <Btn name="numbers" />
        <Dd />
        <Btn name="outline" active />
        <Sep w={9} />
        <Btn name="indent" />
        <Btn name="outdent" />
        <Sep />
        <Btn name="spacing" />
        <Dd />
        <Btn name="paraUp" />
        <Btn name="paraDown" />
      </div>
    </div>

    <div className="flex-1 min-h-0 flex">
      {/* ruler and the pages */}
      <div className="flex-1 min-w-0 flex flex-col">
        <div className="h-[22px] shrink-0 flex pt-[3px]">
          <div className="w-[393px] shrink-0 pl-[9px] pt-[6px]">
            <div className="w-[5px] h-[6px] border-l-2 border-b-2 border-[#555555]" />
          </div>
          <HRuler />
        </div>
        <div className="flex-1 min-h-0 flex overflow-hidden">
          <div className="w-[392px] shrink-0 pl-[4px] pt-[427px]">
            <VRuler />
          </div>
          <div className="w-[1094px] shrink-0 pt-[4px]">
            <div className="h-[399px] bg-white border-x border-b border-[#9a9a9a] overflow-hidden shadow-[0_2px_3px_rgba(0,0,0,0.2)]">
              <div className="-mt-[24px] pl-[137px] font-['Liberation_Serif',serif] text-[22px] leading-[58px] text-black">
                {MINISTERS.map((line) => (
                  <div key={line} className="whitespace-nowrap">{line}</div>
                ))}
              </div>
              <div className="flex justify-between pl-[85px] pr-[87px] mt-[84px]">
                <div className="w-[20px] h-[19px] border-t border-r border-[#c4c4c4]" />
                <div className="w-[18px] h-[19px] border-t border-l border-[#c4c4c4]" />
              </div>
            </div>
            <div className="h-[23px] flex items-center pl-[1px] pr-[2px]">
              <div className="w-full border-t-2 border-dotted border-[#6d64b5]" />
            </div>
            <div className="h-[400px] bg-white border border-[#9a9a9a]">
              <div className="flex justify-between items-end pl-[85px] pr-[87px] pt-[86px]">
                <div className="w-[20px] h-[19px] border-b border-r border-[#c4c4c4]" />
                <div className="w-[18px] h-[14px] border-b border-l border-[#c4c4c4]" />
              </div>
              <div className="ml-[104px] w-px h-[24px] bg-black" />
            </div>
          </div>
        </div>
      </div>

      {/* vertical scrollbar */}
      <div className="w-[21px] shrink-0 flex flex-col items-center justify-between border-l border-[#fafafa] bg-[#eeeeee] pt-[7px] pb-[6px]">
        <svg width="12" height="8" viewBox="0 0 12 8" fill="none" stroke="#555555" strokeWidth="1.800">
          <path d="M1 7l5-5 5 5" />
        </svg>
        <div className="w-[19px] h-[75px] bg-[#cdcdcd] mt-auto mb-[126px]" />
        <svg width="12" height="8" viewBox="0 0 12 8" fill="none" stroke="#555555" strokeWidth="1.800">
          <path d="M1 1l5 5 5-5" />
        </svg>
      </div>

      {/* sidebar deck */}
      <div className="w-[48px] shrink-0 relative border-l border-[#a8a8a8] flex flex-col items-center pl-[5px] pt-[6px] gap-[7px]">
        <svg width="14" height="14" viewBox="0 0 14 14" fill="none" stroke="#444444" strokeWidth="1.200">
          <path d="M2 3h11M2 7h11M2 11h11" />
        </svg>
        <div className="mt-[7px]">{icons.sbProps}</div>
        <div className="mt-[2px]">{icons.sbStyles}</div>
        <div className="-mt-[1px] w-[33px] h-[34px] bg-[#c0def6] border border-[#8cc3ee] flex items-center justify-center">{icons.sbGallery}</div>
        <div className="-mt-[2px]">{icons.sbNav}</div>
        <div className="mt-[3px]">{icons.sbPage}</div>
        <div className="mt-[1px]">{icons.sbInspect}</div>
        <div className="mt-[3px]">{icons.sbManage}</div>
        <div className="absolute left-0 top-[366px] w-[7px] h-[74px] bg-[#4a4a4a] flex items-center justify-center">
          <div className="w-0 h-0 border-y-[4px] border-l-[4px] border-y-transparent border-l-white" />
        </div>
      </div>
    </div>

    <DrawingBar />
    <StatusBar />
    <Taskbar />

    <div className="absolute left-[1177px] top-[1010px] w-[38px] h-[38px] rounded-full bg-[#2018d0]/90 blur-[3px]" />
    <svg className="absolute left-[1188px] top-[1018px]" width="16" height="26" viewBox="0 0 16 26" fill="none" stroke="#6a6ae8">
      <path d="M8 1l4 5H4z" fill="#101060" />
      <path d="M8 6v14M4 20h8l-4 5z" />
    </svg>
  </div>
);

export default App;
